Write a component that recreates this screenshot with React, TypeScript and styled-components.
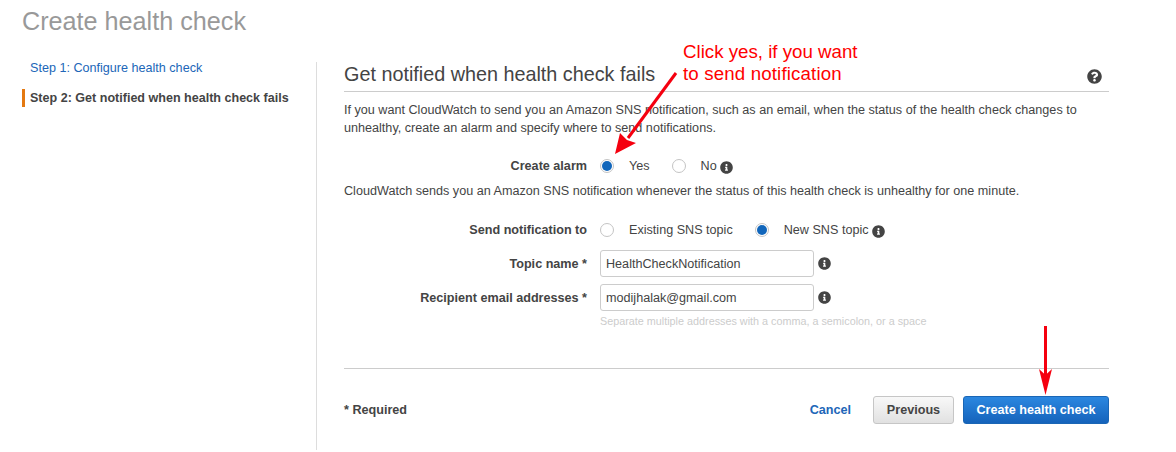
import styled, { createGlobalStyle } from "styled-components";
import { FaInfoCircle, FaQuestionCircle } from "react-icons/fa";

const GlobalStyle = createGlobalStyle`
  html, body {
    margin: 0;
    padding: 0;
    background: #fff;
    font-family: "Liberation Sans", Arial, sans-serif;
    color: #444;
  }
`;

function App() {
  return (
    <Page>
      <GlobalStyle />
      <Title>Create health check</Title>
      <Columns>
        <Sidebar>
          <StepLink>Step 1: Configure health check</StepLink>
          <ActiveStep>Step 2: Get notified when health check fails</ActiveStep>
        </Sidebar>
        <Main>
          <HeadingRow>
            <Heading>Get notified when health check fails</Heading>
            <FaQuestionCircle size={15} color="#444" />
          </HeadingRow>
          <Intro>
            If you want CloudWatch to send you an Amazon SNS notification, such as an email, when the status of the
            health check changes to unhealthy, create an alarm and specify where to send notifications.
          </Intro>
          <AlarmRow>
            <FieldLabel>Create alarm</FieldLabel>
            <Controls>
              <Radio $checked />
              <RadioText $gap={22}>Yes</RadioText>
              <Radio />
              <RadioText $gap={0}>No</RadioText>
              <InlineInfo />
            </Controls>
          </AlarmRow>
          <AlarmNote>
            CloudWatch sends you an Amazon SNS notification whenever the status of this health check is unhealthy for
            one minute.
          </AlarmNote>
          <TopicRow>
            <FieldLabel>Send notification to</FieldLabel>
            <Controls>
              <Radio />
              <RadioText $gap={22}>Existing SNS topic</RadioText>
              <Radio $checked />
              <RadioText $gap={0}>New SNS topic</RadioText>
              <InlineInfo />
            </Controls>
          </TopicRow>
          <InputRow>
            <FieldLabel>Topic name *</FieldLabel>
            <TextInput defaultValue="HealthCheckNotification" />
            <FieldInfo />
          </InputRow>
          <InputRow>
            <FieldLabel>Recipient email addresses *</FieldLabel>
            <TextInput defaultValue="modijhalak@gmail.com" />
            <FieldInfo />
          </InputRow>
          <Hint>Separate multiple addresses with a comma, a semicolon, or a space</Hint>
          <Footer>
            <Required>* Required</Required>
            <Actions>
              <CancelLink>Cancel</CancelLink>
              <SecondaryButton>Previous</SecondaryButton>
              <PrimaryButton>Create health check</PrimaryButton>
            </Actions>
          </Footer>
        </Main>
      </Columns>

      <Callout>
        Click yes, if you want
        <br />
        <CalloutTail>to send notification</CalloutTail>
      </Callout>
      <ArrowLayer width="1176" height="452" viewBox="0 0 1176 452">
        <path d="M676 73 L628 138" stroke="#f5000f" strokeWidth="3" fill="none" />
        <polygon points="615,154 620,133 627,140 636,143" fill="#f5000f" />
        <path d="M1045.5 326 L1045.5 376" stroke="#f5000f" strokeWidth="3" fill="none" />
        <polygon points="1045.5,395 1039,369 1045.5,375 1052,369" fill="#f5000f" />
      </ArrowLayer>
    </Page>
  );
}

const Page = styled.div`
  position: relative;
  width: 1176px;
  height: 452px;
  overflow: hidden;
  padding-left: 22px;
  box-sizing: border-box;
`;

const Title = styled.h1`
  margin: 0;
  padding-top: 7px;
  height: 62px;
  box-sizing: border-box;
  font-size: 25.2px;
  line-height: 28px;
  font-weight: 400;
  color: #999;
`;

const Columns = styled.div`
  display: flex;
  height: 388px;
`;

const Sidebar = styled.nav`
  width: 294px;
  flex: none;
  border-right: 1px solid #ddd;
  font-size: 12.6px;
`;

const StepLink = styled.div`
  padding: 0 0 0 8px;
  line-height: 18px;
  color: #2166b8;
  margin-bottom: 12px;
  margin-top: -3px;
`;

const ActiveStep = styled.div`
  border-left: 3px solid #e47911;
  padding-left: 5px;
  line-height: 18px;
  font-size: 12.55px;
  font-weight: 700;
  color: #444;
`;

const Main = styled.main`
  width: 765px;
  margin-left: 27px;
  font-size: 12.62px;
`;

const HeadingRow = styled.div`
  height: 30px;
  box-sizing: border-box;
  border-bottom: 1px solid #ccc;
  display: flex;
  justify-content: space-between;
  align-items: center;
  padding-right: 7px;
`;

const Heading = styled.h2`
  margin: -5px 0 0;
  font-size: 19.8px;
  font-weight: 400;
  line-height: 24px;
  color: #444;
`;

const Intro = styled.p`
  margin: 9px 0 0;
  line-height: 18px;
  width: 750px;
`;

const FormRow = styled.div`
  display: grid;
  grid-template-columns: 243px auto 1fr;
  align-items: center;
  column-gap: 13px;
`;

const AlarmRow = styled(FormRow)`
  margin-top: 20px;
  height: 18px;
`;

const AlarmNote = styled.p`
  margin: 7px 0 0;
  line-height: 18px;
`;

const TopicRow = styled(FormRow)`
  margin: 21px 0 11px;
  height: 18px;
`;

const InputRow = styled(FormRow)`
  margin-top: 7px;
  height: 27px;
`;

const FieldLabel = styled.label`
  text-align: right;
  font-weight: 700;
  color: #444;
`;

const Controls = styled.div`
  display: flex;
  align-items: center;
`;

const Radio = styled.span<{ $checked?: boolean }>`
  width: 14px;
  height: 14px;
  flex: none;
  box-sizing: border-box;
  border-radius: 50%;
  border: 1px solid #c4c4c4;
  background: #fff;
  display: inline-flex;
  align-items: center;
  justify-content: center;
  &::after {
    content: "";
    width: 10px;
    height: 10px;
    border-radius: 50%;
    background: ${(p) => (p.$checked ? "#1166bb" : "transparent")};
  }
`;

const RadioText = styled.span<{ $gap: number }>`
  margin-left: 15px;
  margin-right: ${(p) => p.$gap}px;
  margin-top: -1px;
`;

const InlineInfo = styled(FaInfoCircle).attrs({ size: 13, color: "#444" })`
  margin-left: 3px;
  margin-top: 2px;
`;

const FieldInfo = styled(FaInfoCircle).attrs({ size: 13, color: "#444" })`
  margin-left: -9px;
`;

const TextInput = styled.input`
  width: 214px;
  height: 27px;
  box-sizing: border-box;
  border: 1px solid #ccc;
  border-radius: 3px;
  padding: 0 5px;
  font: inherit;
  color: #444;
  outline: none;
`;

const Hint = styled.div`
  margin: 3px 0 0 256px;
  font-size: 10.8px;
  line-height: 14px;
  color: #ccc;
`;

const Footer = styled.div`
  margin-top: 40px;
  border-top: 1px solid #ccc;
  padding-top: 27px;
  display: flex;
  justify-content: space-between;
  align-items: center;
`;

const Required = styled.span`
  font-weight: 700;
  color: #444;
`;

const Actions = styled.div`
  display: flex;
  align-items: center;
`;

const CancelLink = styled.a`
  font-weight: 700;
  color: #2166b8;
  margin-right: 22px;
`;

const SecondaryButton = styled.button`
  width: 81px;
  height: 28px;
  margin-right: 9px;
  border: 1px solid #c6c6c6;
  border-radius: 3px;
  background: linear-gradient(#f8f8f8, #e1e1e1);
  font: inherit;
  font-weight: 700;
  color: #444;
  padding: 0;
`;

const PrimaryButton = styled.button`
  width: 146px;
  height: 28px;
  border: 1px solid #1a66b5;
  border-radius: 3px;
  background: linear-gradient(#2b87e0, #1563bb);
  font: inherit;
  font-weight: 700;
  color: #fff;
  padding: 0;
`;

const Callout = styled.div`
  position: absolute;
  left: 683px;
  top: 41px;
  font-size: 18.7px;
  line-height: 21.5px;
  color: #f00;
`;

const CalloutTail = styled.span`
  letter-spacing: 0.15px;
`;

const ArrowLayer = styled.svg`
  position: absolute;
  left: 0;
  top: 0;
  pointer-events: none;
`;

export default App;
